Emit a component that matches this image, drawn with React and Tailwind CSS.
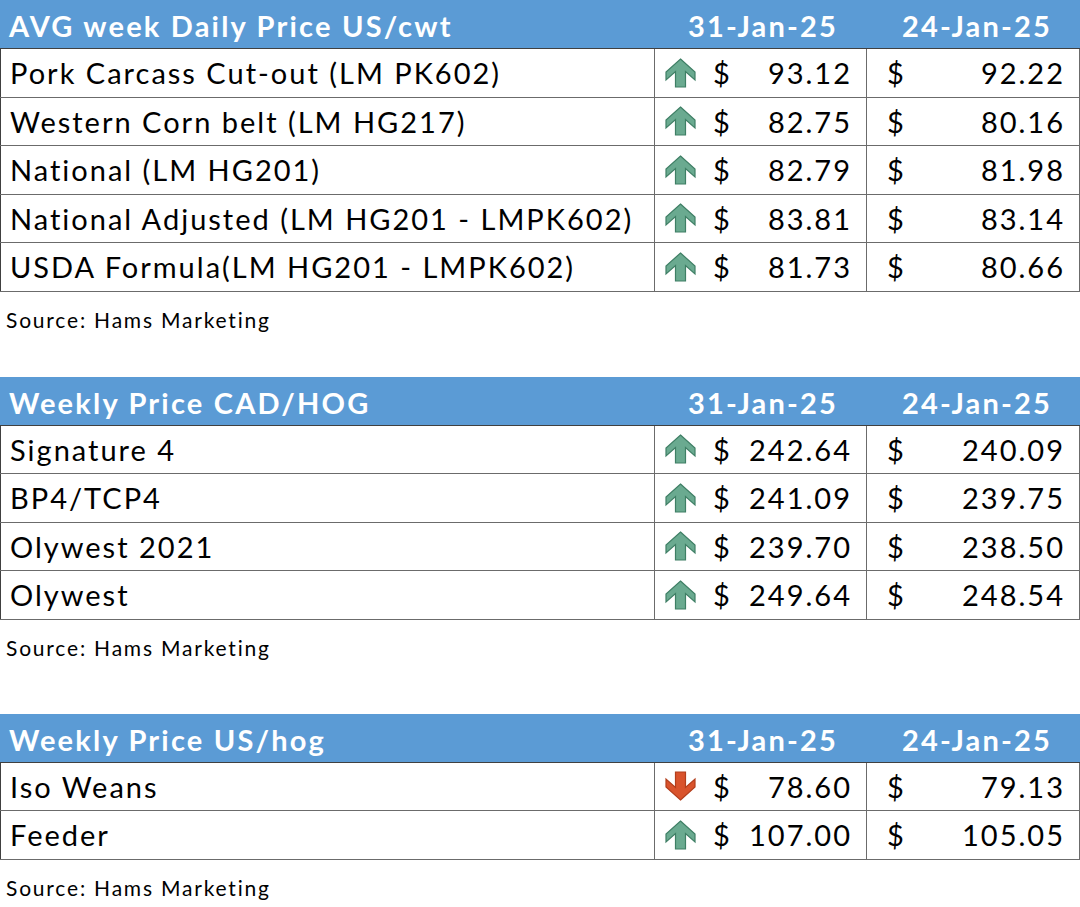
import React from "react";

const tables = [
    {
        title: "AVG week Daily Price US/cwt",
        rows: [
            { name: "Pork Carcass Cut-out (LM PK602)", cur: "93.12", prev: "92.22", up: true },
            { name: "Western Corn belt (LM HG217)", cur: "82.75", prev: "80.16", up: true },
            { name: "National (LM HG201)", cur: "82.79", prev: "81.98", up: true },
            { name: "National Adjusted (LM HG201 - LMPK602)", cur: "83.81", prev: "83.14", up: true },
            { name: "USDA Formula(LM HG201 - LMPK602)", cur: "81.73", prev: "80.66", up: true },
        ],
        gap: "h-[43px]",
    },
    {
        title: "Weekly Price CAD/HOG",
        rows: [
            { name: "Signature 4", cur: "242.64", prev: "240.09", up: true },
            { name: "BP4/TCP4", cur: "241.09", prev: "239.75", up: true },
            { name: "Olywest 2021", cur: "239.70", prev: "238.50", up: true },
            { name: "Olywest", cur: "249.64", prev: "248.54", up: true },
        ],
        gap: "h-[52px]",
    },
    {
        title: "Weekly Price US/hog",
        rows: [
            { name: "Iso Weans", cur: "78.60", prev: "79.13", up: false },
            { name: "Feeder", cur: "107.00", prev: "105.05", up: true },
        ],
        gap: "h-0",
    },
];

const Arrow = ({ up }) => (
    <svg width="31" height="30" viewBox="0 0 31 30" className="shrink-0">
        {up ? (
            <path
                d="M15.5 1 L30 14 L30 22 L20.5 13.5 L20.5 29 L10.5 29 L10.5 13.5 L1 22 L1 14 Z"
                fill="#6aaa90"
                stroke="#3f7f65"
                strokeWidth="1.2"
            />
        ) : (
            <path
                d="M15.5 29 L30 16 L30 8 L20.5 16.5 L20.5 1 L10.5 1 L10.5 16.5 L1 8 L1 16 Z"
                fill="#d9532c"
                stroke="#b23e1c"
                strokeWidth="1.2"
            />
        )}
    </svg>
);

const PriceTable = ({ table }) => (
    <div>
        {/* Header */}
        <div className="grid grid-cols-[654px_212px_214px] h-[49px] pt-[4px] bg-[#5b9bd5] text-white font-bold text-[29px] tracking-[2.2px] items-center border-b border-[#404040]">
            <div className="pl-[9px]">{table.title}</div>
            <div className="text-center pl-[6px]">31-Jan-25</div>
            <div className="text-center pl-[8px]">24-Jan-25</div>
        </div>

        {/* Rows */}
        {table.rows.map((row) => (
            <div
                key={row.name}
                className="grid grid-cols-[654px_212px_214px] h-[48.5px] text-[29px] tracking-[2px] text-black items-center border-b border-[#6b6b6b]"
            >
                <div className="h-full flex items-center pl-[9px] border-l border-[#404040]">
                    {row.name}
                </div>
                <div className="h-full flex items-center border-l border-[#6b6b6b] pl-[10px] pr-[14px]">
                    <Arrow up={row.up} />
                    <span className="ml-[17px]">$</span>
                    <span className="ml-auto">{row.cur}</span>
                </div>
                <div className="h-full flex items-center border-l border-r border-[#6b6b6b] pl-[20px] pr-[14px]">
                    <span>$</span>
                    <span className="ml-auto">{row.prev}</span>
                </div>
            </div>
        ))}

        <div className="pl-[6px] pt-[14px] text-[21px] tracking-[1.8px] text-black leading-[28px]">
            Source: Hams Marketing
        </div>
        <div className={table.gap}></div>
    </div>
);

const App = () => {
    return (
        <div className="w-[1080px] h-[907px] bg-white overflow-hidden font-['Lato','Open_Sans',sans-serif]">
            {tables.map((t) => (
                <PriceTable key={t.title} table={t} />
            ))}
        </div>
    );
};

export default App;
